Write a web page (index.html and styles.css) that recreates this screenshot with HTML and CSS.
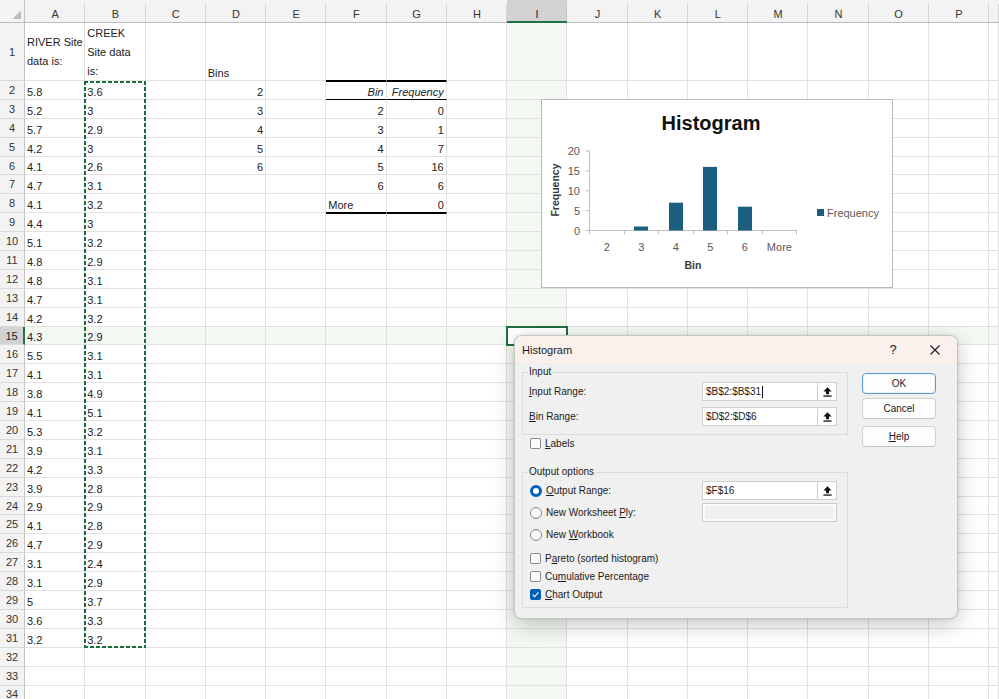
FILE: index.html
```html
<!DOCTYPE html>
<html lang="en">
<head>
<meta charset="utf-8">
<title>Histogram</title>
<link rel="stylesheet" href="styles.css">
</head>
<body>
<div class="app">
  <div class="sheet">
    <div class="r hdr"><span class="corner"><i class="tri"></i></span><span>A</span><span>B</span><span>C</span><span>D</span><span>E</span><span>F</span><span>G</span><span>H</span><span class="sel">I</span><span>J</span><span>K</span><span>L</span><span>M</span><span>N</span><span>O</span><span>P</span><span></span></div>
    <div class="r"><span class="rh">1</span><span class="wrap">RIVER Site<br>data is:</span><span class="wrap">CREEK<br>Site data<br>is:</span><span></span><span>Bins</span><span></span><span class="tb"></span><span class="tb"></span><span></span><span></span><span></span><span></span><span></span><span></span><span></span><span></span><span></span><span></span></div>
    <div class="r"><span class="rh">2</span><span>5.8</span><span>3.6</span><span></span><span class="n">2</span><span></span><span class="n it tt">Bin</span><span class="n it tt">Frequency</span><span></span><span></span><span></span><span></span><span></span><span></span><span></span><span></span><span></span><span></span></div>
    <div class="r"><span class="rh">3</span><span>5.2</span><span>3</span><span></span><span class="n">3</span><span></span><span class="n">2</span><span class="n">0</span><span></span><span></span><span></span><span></span><span></span><span></span><span></span><span></span><span></span><span></span></div>
    <div class="r"><span class="rh">4</span><span>5.7</span><span>2.9</span><span></span><span class="n">4</span><span></span><span class="n">3</span><span class="n">1</span><span></span><span></span><span></span><span></span><span></span><span></span><span></span><span></span><span></span><span></span></div>
    <div class="r"><span class="rh">5</span><span>4.2</span><span>3</span><span></span><span class="n">5</span><span></span><span class="n">4</span><span class="n">7</span><span></span><span></span><span></span><span></span><span></span><span></span><span></span><span></span><span></span><span></span></div>
    <div class="r"><span class="rh">6</span><span>4.1</span><span>2.6</span><span></span><span class="n">6</span><span></span><span class="n">5</span><span class="n">16</span><span></span><span></span><span></span><span></span><span></span><span></span><span></span><span></span><span></span><span></span></div>
    <div class="r"><span class="rh">7</span><span>4.7</span><span>3.1</span><span></span><span></span><span></span><span class="n">6</span><span class="n">6</span><span></span><span></span><span></span><span></span><span></span><span></span><span></span><span></span><span></span><span></span></div>
    <div class="r"><span class="rh">8</span><span>4.1</span><span>3.2</span><span></span><span></span><span></span><span class="tb">More</span><span class="n tb">0</span><span></span><span></span><span></span><span></span><span></span><span></span><span></span><span></span><span></span><span></span></div>
    <div class="r"><span class="rh">9</span><span>4.4</span><span>3</span><span></span><span></span><span></span><span class="tk"></span><span class="tk"></span><span></span><span></span><span></span><span></span><span></span><span></span><span></span><span></span><span></span><span></span></div>
    <div class="r"><span class="rh">10</span><span>5.1</span><span>3.2</span><span></span><span></span><span></span><span></span><span></span><span></span><span></span><span></span><span></span><span></span><span></span><span></span><span></span><span></span><span></span></div>
    <div class="r"><span class="rh">11</span><span>4.8</span><span>2.9</span><span></span><span></span><span></span><span></span><span></span><span></span><span></span><span></span><span></span><span></span><span></span><span></span><span></span><span></span><span></span></div>
    <div class="r"><span class="rh">12</span><span>4.8</span><span>3.1</span><span></span><span></span><span></span><span></span><span></span><span></span><span></span><span></span><span></span><span></span><span></span><span></span><span></span><span></span><span></span></div>
    <div class="r"><span class="rh">13</span><span>4.7</span><span>3.1</span><span></span><span></span><span></span><span></span><span></span><span></span><span></span><span></span><span></span><span></span><span></span><span></span><span></span><span></span><span></span></div>
    <div class="r"><span class="rh">14</span><span>4.2</span><span>3.2</span><span></span><span></span><span></span><span></span><span></span><span></span><span></span><span></span><span></span><span></span><span></span><span></span><span></span><span></span><span></span></div>
    <div class="r cur"><span class="rh">15</span><span>4.3</span><span>2.9</span><span></span><span></span><span></span><span></span><span></span><span></span><span class="act"></span><span></span><span></span><span></span><span></span><span></span><span></span><span></span><span></span></div>
    <div class="r"><span class="rh">16</span><span>5.5</span><span>3.1</span><span></span><span></span><span></span><span></span><span></span><span></span><span></span><span></span><span></span><span></span><span></span><span></span><span></span><span></span><span></span></div>
    <div class="r"><span class="rh">17</span><span>4.1</span><span>3.1</span><span></span><span></span><span></span><span></span><span></span><span></span><span></span><span></span><span></span><span></span><span></span><span></span><span></span><span></span><span></span></div>
    <div class="r"><span class="rh">18</span><span>3.8</span><span>4.9</span><span></span><span></span><span></span><span></span><span></span><span></span><span></span><span></span><span></span><span></span><span></span><span></span><span></span><span></span><span></span></div>
    <div class="r"><span class="rh">19</span><span>4.1</span><span>5.1</span><span></span><span></span><span></span><span></span><span></span><span></span><span></span><span></span><span></span><span></span><span></span><span></span><span></span><span></span><span></span></div>
    <div class="r"><span class="rh">20</span><span>5.3</span><span>3.2</span><span></span><span></span><span></span><span></span><span></span><span></span><span></span><span></span><span></span><span></span><span></span><span></span><span></span><span></span><span></span></div>
    <div class="r"><span class="rh">21</span><span>3.9</span><span>3.1</span><span></span><span></span><span></span><span></span><span></span><span></span><span></span><span></span><span></span><span></span><span></span><span></span><span></span><span></span><span></span></div>
    <div class="r"><span class="rh">22</span><span>4.2</span><span>3.3</span><span></span><span></span><span></span><span></span><span></span><span></span><span></span><span></span><span></span><span></span><span></span><span></span><span></span><span></span><span></span></div>
    <div class="r"><span class="rh">23</span><span>3.9</span><span>2.8</span><span></span><span></span><span></span><span></span><span></span><span></span><span></span><span></span><span></span><span></span><span></span><span></span><span></span><span></span><span></span></div>
    <div class="r"><span class="rh">24</span><span>2.9</span><span>2.9</span><span></span><span></span><span></span><span></span><span></span><span></span><span></span><span></span><span></span><span></span><span></span><span></span><span></span><span></span><span></span></div>
    <div class="r"><span class="rh">25</span><span>4.1</span><span>2.8</span><span></span><span></span><span></span><span></span><span></span><span></span><span></span><span></span><span></span><span></span><span></span><span></span><span></span><span></span><span></span></div>
    <div class="r"><span class="rh">26</span><span>4.7</span><span>2.9</span><span></span><span></span><span></span><span></span><span></span><span></span><span></span><span></span><span></span><span></span><span></span><span></span><span></span><span></span><span></span></div>
    <div class="r"><span class="rh">27</span><span>3.1</span><span>2.4</span><span></span><span></span><span></span><span></span><span></span><span></span><span></span><span></span><span></span><span></span><span></span><span></span><span></span><span></span><span></span></div>
    <div class="r"><span class="rh">28</span><span>3.1</span><span>2.9</span><span></span><span></span><span></span><span></span><span></span><span></span><span></span><span></span><span></span><span></span><span></span><span></span><span></span><span></span><span></span></div>
    <div class="r"><span class="rh">29</span><span>5</span><span>3.7</span><span></span><span></span><span></span><span></span><span></span><span></span><span></span><span></span><span></span><span></span><span></span><span></span><span></span><span></span><span></span></div>
    <div class="r"><span class="rh">30</span><span>3.6</span><span>3.3</span><span></span><span></span><span></span><span></span><span></span><span></span><span></span><span></span><span></span><span></span><span></span><span></span><span></span><span></span><span></span></div>
    <div class="r"><span class="rh">31</span><span>3.2</span><span>3.2</span><span></span><span></span><span></span><span></span><span></span><span></span><span></span><span></span><span></span><span></span><span></span><span></span><span></span><span></span><span></span></div>
    <div class="r"><span class="rh">32</span><span></span><span></span><span></span><span></span><span></span><span></span><span></span><span></span><span></span><span></span><span></span><span></span><span></span><span></span><span></span><span></span><span></span></div>
    <div class="r"><span class="rh">33</span><span></span><span></span><span></span><span></span><span></span><span></span><span></span><span></span><span></span><span></span><span></span><span></span><span></span><span></span><span></span><span></span><span></span></div>
    <div class="r"><span class="rh">34</span><span></span><span></span><span></span><span></span><span></span><span></span><span></span><span></span><span></span><span></span><span></span><span></span><span></span><span></span><span></span><span></span><span></span></div>
    <div class="ants"></div>
    <div class="active-cell"></div>
  </div>

  <div class="chart">
    <svg width="350" height="187" viewBox="0 0 350 187">
      <text class="ct" x="169" y="30" text-anchor="middle">Histogram</text>
      <g class="tick-lbl" text-anchor="end">
        <text x="38" y="55">20</text>
        <text x="38" y="74.9">15</text>
        <text x="38" y="94.7">10</text>
        <text x="38" y="114.6">5</text>
        <text x="38" y="134.5">0</text>
      </g>
      <g class="axis">
        <line x1="47.5" y1="50.5" x2="47.5" y2="131"/>
        <line x1="43.5" y1="51" x2="47.5" y2="51"/>
        <line x1="43.5" y1="70.9" x2="47.5" y2="70.9"/>
        <line x1="43.5" y1="90.7" x2="47.5" y2="90.7"/>
        <line x1="43.5" y1="110.6" x2="47.5" y2="110.6"/>
        <line x1="43.5" y1="130.5" x2="47.5" y2="130.5"/>
        <line x1="47.5" y1="130.5" x2="255" y2="130.5"/>
        <line x1="47.5" y1="130.5" x2="47.5" y2="134.5"/>
        <line x1="82.5" y1="130.5" x2="82.5" y2="134.5"/>
        <line x1="116.5" y1="130.5" x2="116.5" y2="134.5"/>
        <line x1="151.5" y1="130.5" x2="151.5" y2="134.5"/>
        <line x1="185.5" y1="130.5" x2="185.5" y2="134.5"/>
        <line x1="220.5" y1="130.5" x2="220.5" y2="134.5"/>
        <line x1="254.5" y1="130.5" x2="254.5" y2="134.5"/>
      </g>
      <g class="bars">
        <rect x="92" y="126.5" width="14" height="4"/>
        <rect x="127" y="102.7" width="14" height="27.8"/>
        <rect x="161" y="66.9" width="14" height="63.6"/>
        <rect x="196" y="106.7" width="14" height="23.8"/>
      </g>
      <g class="tick-lbl" text-anchor="middle">
        <text x="64.8" y="150.5">2</text>
        <text x="99.3" y="150.5">3</text>
        <text x="133.8" y="150.5">4</text>
        <text x="168.4" y="150.5">5</text>
        <text x="202.9" y="150.5">6</text>
        <text x="237.4" y="150.5">More</text>
      </g>
      <text class="at" x="151" y="168.5" text-anchor="middle">Bin</text>
      <text class="at" transform="translate(16.5 90) rotate(-90)" text-anchor="middle">Frequency</text>
      <rect class="leg" x="275" y="109" width="7" height="7"/>
      <text class="tick-lbl" x="285" y="116.5">Frequency</text>
    </svg>
  </div>

  <div class="dialog">
    <div class="titlebar">
      <span class="title">Histogram</span>
      <span class="qmark">?</span>
      <span class="close"><svg width="10" height="10" viewBox="0 0 10 10"><path d="M0.5 0.5 L9.5 9.5 M9.5 0.5 L0.5 9.5" stroke="#1b1b1b" stroke-width="1.1" fill="none"/></svg></span>
    </div>
    <div class="dbody">
      <div class="dleft">
        <fieldset class="group g-in">
          <legend>Input</legend>
          <div class="frow first">
            <span><u>I</u>nput Range:</span>
            <div class="field"><span class="fv">$B$2:$B$31<i class="caret"></i></span><span class="pick"><svg width="9" height="10" viewBox="0 0 9 10"><path d="M4.5 0.3 L8.6 4.6 H6 V7.2 H3 V4.6 H0.4 Z" fill="#111"/><rect x="0.4" y="8.4" width="8.2" height="1.3" fill="#111"/></svg></span></div>
          </div>
          <div class="frow">
            <span><u>B</u>in Range:</span>
            <div class="field"><span class="fv">$D$2:$D$6</span><span class="pick"><svg width="9" height="10" viewBox="0 0 9 10"><path d="M4.5 0.3 L8.6 4.6 H6 V7.2 H3 V4.6 H0.4 Z" fill="#111"/><rect x="0.4" y="8.4" width="8.2" height="1.3" fill="#111"/></svg></span></div>
          </div>
        </fieldset>
        <div class="crow labels"><span class="cb"></span><span><u>L</u>abels</span></div>
        <fieldset class="group g-out">
          <legend>Output options</legend>
          <div class="frow first">
            <span class="opt"><span class="rb on"></span><span><u>O</u>utput Range:</span></span>
            <div class="field"><span class="fv">$F$16</span><span class="pick"><svg width="9" height="10" viewBox="0 0 9 10"><path d="M4.5 0.3 L8.6 4.6 H6 V7.2 H3 V4.6 H0.4 Z" fill="#111"/><rect x="0.4" y="8.4" width="8.2" height="1.3" fill="#111"/></svg></span></div>
          </div>
          <div class="frow">
            <span class="opt"><span class="rb"></span><span>New Worksheet <u>P</u>ly:</span></span>
            <div class="field dis"></div>
          </div>
          <div class="frow">
            <span class="opt"><span class="rb"></span><span>New <u>W</u>orkbook</span></span>
          </div>
          <div class="crow gap"><span class="cb"></span><span>P<u>a</u>reto (sorted histogram)</span></div>
          <div class="crow"><span class="cb"></span><span>Cu<u>m</u>ulative Percentage</span></div>
          <div class="crow"><span class="cb on"><svg width="9" height="9" viewBox="0 0 9 9"><path d="M1.6 4.7 L3.6 6.6 L7.5 2.4" stroke="#fff" stroke-width="1.1" fill="none"/></svg></span><span><u>C</u>hart Output</span></div>
        </fieldset>
      </div>
      <div class="dright">
        <button class="btn ok">OK</button>
        <button class="btn">Cancel</button>
        <button class="btn help"><u>H</u>elp</button>
      </div>
    </div>
  </div>
</div>
</body>
</html>
```
FILE: styles.css
```css
* { box-sizing: border-box; }
html, body { margin: 0; height: 100%; }
body {
  overflow: hidden;
  background: #fff;
  font-family: "Liberation Sans", Arial, sans-serif;
  font-size: 11px;
  color: #222;
}
.app { position: relative; width: 999px; height: 699px; overflow: hidden; }

/* ---------- sheet ---------- */
.sheet {
  position: relative;
  display: grid;
  grid-template-columns: 25px repeat(16, 60.25px) 1fr;
  grid-template-rows: 23px 58px repeat(33, 18.9px);
}
.r { display: contents; }
.r > span {
  display: flex;
  align-items: flex-end;
  padding: 0 2px;
  line-height: 14px;
  white-space: nowrap;
  overflow: hidden;
  border-right: 1px solid #e1e1e1;
  border-bottom: 1px solid #e1e1e1;
}
.r > span:nth-child(10) { background: #f3f9f1; }
.r.cur > span { background: #f3f9f1; }
.r > .n { justify-content: flex-end; }
.r > .it { font-style: italic; }
.r > .wrap { align-items: center; line-height: 19px; padding-top: 1px; }
.r > .tb { border-bottom-color: #000; }
.r > .tt { border-top: 1px solid #000; border-bottom-color: #000; }
.r > .tk { border-top: 1px solid #000; }

.r > .rh {
  background: #f3f3f3;
  justify-content: center;
  align-items: center;
  padding: 0;
  color: #333;
  border-right: 1px solid #c4c4c4;
  border-bottom: 1px solid #dadada;
}
.r.cur > .rh { background: #d2d2d2; border-right: 2px solid #217346; color: #222; }
.r.cur > .act { background: #fff; }

.r.hdr > span {
  background: #f3f3f3 linear-gradient(#d4d4d4, #d4d4d4) right bottom / 1px 18px no-repeat;
  justify-content: center;
  align-items: center;
  padding: 6px 0 0;
  color: #333;
  border-right: 0;
  border-bottom: 1px solid #bdbdbd;
}
.r.hdr > .sel {
  background: #d2d2d2 linear-gradient(#c4c4c4, #c4c4c4) right bottom / 1px 18px no-repeat;
  border-bottom: 2px solid #217346;
  padding-top: 7px;
  color: #222;
}
.r.hdr > .corner {
  justify-content: flex-end;
  align-items: flex-end;
  padding: 0 3px 3px 0;
  background: #f3f3f3;
  border-right: 1px solid #c4c4c4;
}
.tri {
  display: block;
  width: 9px;
  height: 9px;
  background: linear-gradient(135deg, transparent 50%, #bdbdbd 50%);
}

.ants {
  position: absolute;
  grid-column: 3 / 4;
  grid-row: 3 / 33;
  inset: 0 0 0 -1px;
  background:
    repeating-linear-gradient(90deg, #1d6e3e 0 4px, transparent 4px 6px) left top / 100% 2px no-repeat,
    repeating-linear-gradient(90deg, #1d6e3e 0 4px, transparent 4px 6px) left bottom / 100% 2px no-repeat,
    repeating-linear-gradient(180deg, #1d6e3e 0 4px, transparent 4px 6px) left top / 2px 100% no-repeat,
    repeating-linear-gradient(180deg, #1d6e3e 0 4px, transparent 4px 6px) right top / 2px 100% no-repeat;
}
.active-cell {
  position: absolute;
  grid-column: 10 / 11;
  grid-row: 16 / 17;
  inset: -1px -1px -1px -1px;
  border: 2px solid #1f6e43;
}

/* ---------- chart ---------- */
.chart {
  position: absolute;
  left: 541px;
  top: 99px;
  width: 352px;
  height: 189px;
  background: #fff;
  border: 1px solid #b8b8b8;
}
.chart svg { display: block; font-family: "Liberation Sans", Arial, sans-serif; }
.ct { font-size: 20px; font-weight: bold; fill: #111; }
.tick-lbl { font-size: 11px; fill: #595959; }
.axis line { stroke: #bfbfbf; stroke-width: 1; }
.bars rect, .leg { fill: #1b5e80; }
.at { font-size: 10.5px; font-weight: bold; fill: #3a3a3a; }

/* ---------- dialog ---------- */
.dialog {
  position: absolute;
  left: 514px;
  top: 335px;
  width: 444px;
  height: 284px;
  background: #f0f0f0;
  border: 1px solid #c6c6c6;
  border-radius: 8px;
  box-shadow: 0 6px 22px rgba(0, 0, 0, 0.22), 0 0 3px rgba(0, 0, 0, 0.12);
  overflow: hidden;
  font-size: 10px;
  color: #1b1b1b;
}
.titlebar {
  height: 27px;
  background: #faf1ec;
  display: flex;
  align-items: center;
  padding: 0 1px 0 7px;
}
.title { flex: 1; font-size: 11px; }
.qmark { width: 30px; text-align: center; font-size: 13px; margin-right: 6px; }
.close { width: 42px; display: flex; justify-content: center; }
.close svg { display: block; }

.dbody { display: flex; padding: 3px 0 0 7px; }
.dleft { width: 326px; }
.dright { width: 74px; margin-left: 14px; padding-top: 7px; }

.group {
  margin: 0;
  min-width: 0;
  border: 1px solid #dcdcdc;
  padding: 0 10px 0 6px;
}
.group legend {
  padding: 0 1px;
  margin-left: -1px;
  line-height: 12px;
  font-size: 10px;
}
.g-in { padding-bottom: 8px; }
.g-out { margin-top: 17px; padding-bottom: 4px; }

.frow {
  display: flex;
  align-items: center;
  justify-content: space-between;
  height: 19px;
}
.g-in .frow + .frow { margin-top: 6px; }
.g-in .frow.first { margin-top: 4px; }
.g-out .frow.first { margin-top: 3px; }
.g-out .frow + .frow { margin-top: 3px; }

.opt { display: flex; align-items: center; gap: 4px; padding-left: 1px; }

.field {
  width: 135px;
  height: 19px;
  display: flex;
  align-items: center;
  background: #fff;
  border: 1px solid #cfcfcf;
  padding-left: 3px;
}
.fv { flex: 1; display: flex; align-items: center; }
.caret { display: block; width: 1px; height: 12px; background: #111; margin-left: 1px; }
.pick {
  width: 20px;
  height: 19px;
  margin: -1px -1px -1px 0;
  display: flex;
  align-items: center;
  justify-content: center;
  background: #fff;
  border: 1px solid #cfcfcf;
  border-radius: 2px;
}
.pick svg { display: block; }
.field.dis { background: #f0f0f0; box-shadow: inset 0 0 0 2px #fbfbfb; border-color: #cbcbcb; }

.crow { display: flex; align-items: center; gap: 4px; height: 18px; padding-left: 1px; }
.crow.gap { margin-top: 5px; }
.crow.labels { height: 12px; margin-top: 2px; padding-left: 8px; }

.cb {
  width: 11px;
  height: 11px;
  flex: none;
  border: 1px solid #8a8a8a;
  border-radius: 2px;
  background: #fbfbfb;
  display: flex;
  align-items: center;
  justify-content: center;
}
.cb.on { background: #005fb8; border-color: #005fb8; }
.cb svg { display: block; }
.rb {
  width: 12px;
  height: 12px;
  flex: none;
  border-radius: 50%;
  border: 1px solid #8a8a8a;
  background: #fbfbfb;
}
.rb.on { border: 3.5px solid #005fb8; background: #fff; }

.btn {
  display: block;
  width: 74px;
  height: 21px;
  padding: 0;
  border: 1px solid #d2d2d2;
  border-bottom-color: #c2c2c2;
  border-radius: 4px;
  background: #fdfdfd;
  font-family: "Liberation Sans", Arial, sans-serif;
  font-size: 10px;
  color: #1b1b1b;
}
.btn + .btn { margin-top: 4px; }
.btn.help { margin-top: 7px; }
.btn.ok { border: 1px solid #5d9ad6; box-shadow: inset 0 0 0 1px #eef5fc; }
```
